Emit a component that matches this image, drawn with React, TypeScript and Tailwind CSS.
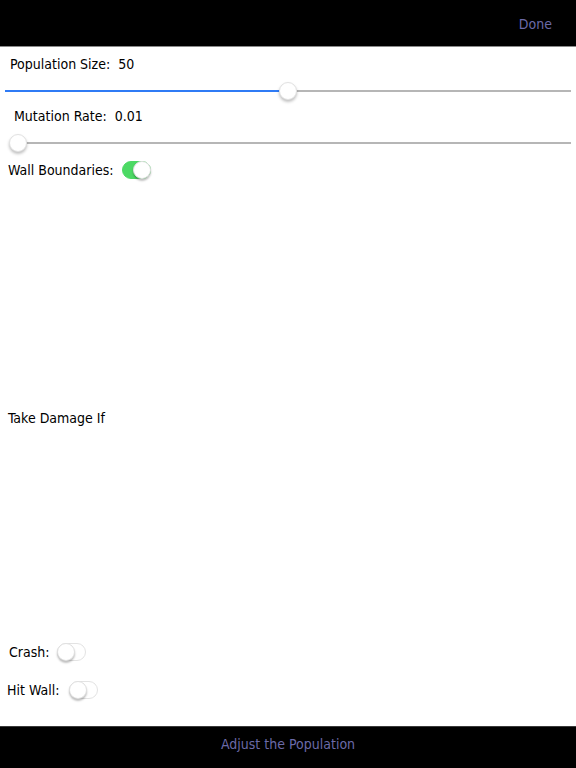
import React, { useState } from "react";

const font = { fontFamily: '"DejaVu Sans Condensed", "DejaVu Sans", sans-serif' };

function Slider({ value, offset }: { value: number; offset: string }) {
  // value in 0..1, thumb centre along the track
  return (
    <div className={`relative h-5 ${offset}`}>
      <div className="absolute left-0 right-0 top-1/2 h-[2px] -translate-y-1/2 bg-[#b6b6b6]" />
      <div
        className="absolute left-0 top-1/2 h-[2px] -translate-y-1/2 bg-[#2f7bf5]"
        style={{ width: `${value * 100}%` }}
      />
      <div
        className="absolute top-1/2 h-[18px] w-[18px] -translate-x-1/2 -translate-y-1/2 rounded-full border border-[#e2e2e2] bg-white shadow-[0_2px_3px_rgba(0,0,0,0.25)]"
        style={{ left: `${value * 100}%` }}
      />
    </div>
  );
}

function Toggle({ on, onChange }: { on: boolean; onChange: (v: boolean) => void }) {
  return (
    <button
      onClick={() => onChange(!on)}
      className={`relative h-[18px] w-[29px] rounded-full border transition-colors ${
        on ? "border-[#4cd964] bg-[#4cd964]" : "border-[#e3e3e3] bg-white"
      }`}
    >
      <span
        className={`absolute top-[-1px] h-[18px] w-[18px] rounded-full border border-[#e0e0e0] bg-white shadow-[0_2px_2px_rgba(0,0,0,0.25)] ${
          on ? "left-[10px]" : "left-[-1px]"
        }`}
      />
    </button>
  );
}

export default function App() {
  const [walls, setWalls] = useState(true);
  const [crash, setCrash] = useState(false);
  const [hitWall, setHitWall] = useState(false);

  return (
    <div className="flex h-[768px] w-[576px] flex-col bg-white text-[14px] text-black" style={font}>
      <div className="flex h-[47px] shrink-0 items-center justify-end border-b border-[#8a8a8a] bg-black pt-[3px] pr-[24px]">
        <span className="text-[14px] text-[#6b6aa8]">Done</span>
      </div>

      <div className="flex flex-1 flex-col">
        <div className="mt-[8px] flex h-[18px] items-center pl-[10px]">Population Size:&nbsp; 50</div>
        <Slider value={0.5} offset="mt-[8px] mx-[5px]" />
        <div className="mt-[6px] flex h-[18px] items-center pl-[14px]">Mutation Rate:&nbsp; 0.01</div>
        <Slider value={0.0} offset="mt-[8px] ml-[18px] mr-[5px]" />
        <div className="mt-[7px] flex h-[20px] items-center gap-[8px] pl-[8px]">
          <span>Wall Boundaries:</span>
          <Toggle on={walls} onChange={setWalls} />
        </div>

        <div className="mt-[228px] flex h-[20px] items-center pl-[8px]">Take Damage If</div>

        <div className="mt-[214px] flex h-[20px] items-center gap-[8px] pl-[9px]">
          <span>Crash:</span>
          <Toggle on={crash} onChange={setCrash} />
        </div>
        <div className="mt-[18px] flex h-[20px] items-center gap-[10px] pl-[7px]">
          <span>Hit Wall:</span>
          <Toggle on={hitWall} onChange={setHitWall} />
        </div>
      </div>

      <div className="flex h-[42px] shrink-0 items-start justify-center border-t border-[#3a3a3a] bg-black pt-[7px]">
        <span className="text-[14px] text-[#6b6aa8]">Adjust the Population</span>
      </div>
    </div>
  );
}
